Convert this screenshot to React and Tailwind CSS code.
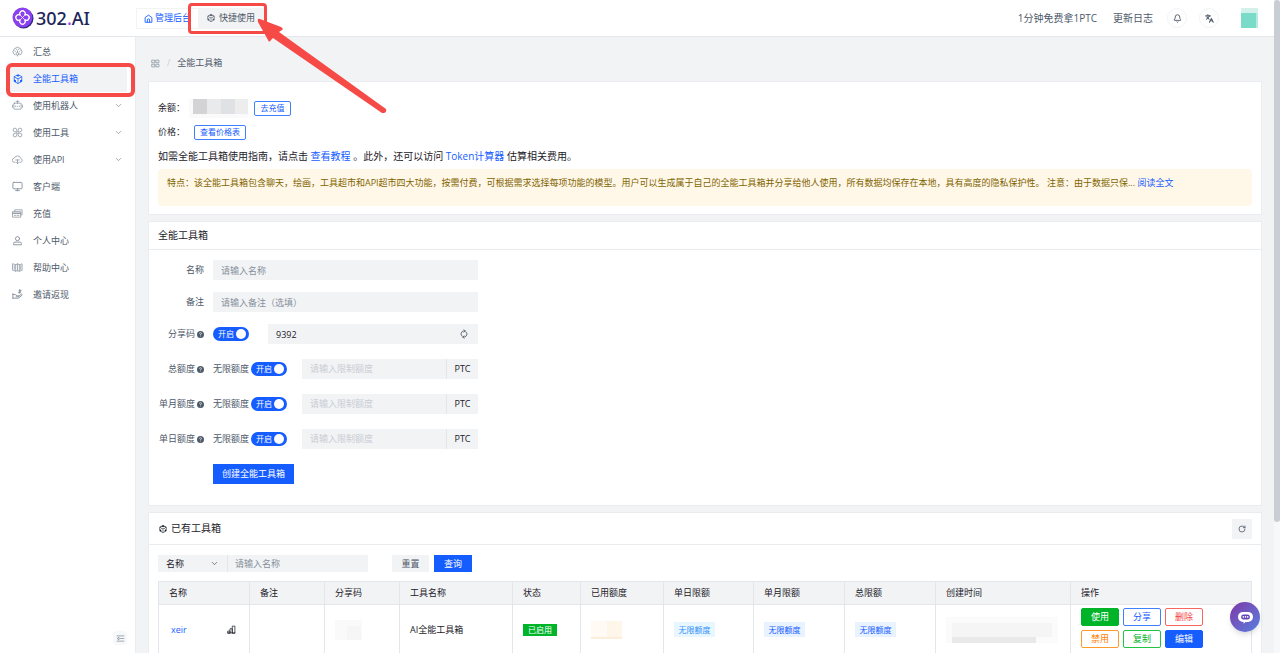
import React, { useState } from "react";
import {
  Bell,
  ChevronDown,
  Languages,
  Monitor,
  RotateCw,
  RefreshCw,
} from "lucide-react";
import { AiOutlineCodeSandbox } from "react-icons/ai";
import { BsFillQuestionCircleFill } from "react-icons/bs";

const Icon = ({ children, className = "w-[11px] h-[11px]", width = 1.6 }) => (
  <svg
    viewBox="0 0 24 24"
    fill="none"
    stroke="currentColor"
    strokeWidth={width}
    strokeLinecap="round"
    strokeLinejoin="round"
    className={className}
    aria-hidden="true"
  >
    {children}
  </svg>
);

const HomeIcon = () => (
  <Icon className="w-[9px] h-[9px]" width={2.4}>
    <path d="M3 21V9.500L12 3l9 6.500V21z" />
    <path d="M9 21v-5a3 3 0 0 1 6 0v5" />
  </Icon>
);

const GaugeIcon = () => (
  <Icon>
    <path d="M7 19H5a9.500 9.500 0 1 1 14 0h-2" />
    <path d="M12 10v4M6 11l1.500.8M18 11l-1.500.8M9 6.500l.8 1.400M15 6.500l-.8 1.400" />
    <circle cx="12" cy="17" r="3" />
    <path d="M12 20v2" />
  </Icon>
);

const RobotIcon = () => (
  <Icon>
    <path d="M12 2v5M9 3h6" />
    <rect x="4" y="7" width="16" height="13" rx="1" />
    <path d="M1 11v5M23 11v5M8 13v1.500M12 14v.5M16 13v1.500" />
  </Icon>
);

const ToolsIcon = () => (
  <Icon>
    <path d="M10.500 10.500H6.500a4 4 0 1 1 4-4zM13.500 10.500v-4a4 4 0 1 1 4 4zM10.500 13.500v4a4 4 0 1 1-4-4zM13.500 13.500h4a4 4 0 1 1-4 4z" />
  </Icon>
);

const CloudIcon = () => (
  <Icon>
    <path d="M7 18H5.500a4.500 4.500 0 0 1-.5-9 7.500 7.500 0 0 1 14.300 1A4.200 4.200 0 0 1 19 18h-2" />
    <path d="M8 13h8M12 13v8M9.500 18.500L12 21l2.500-2.500" />
  </Icon>
);

const CardIcon = () => (
  <Icon>
    <path d="M6 7V4h16v11h-3" />
    <rect x="2" y="8" width="17" height="12" />
    <path d="M2 12h17M2 11h17M5 16h3M11 16h4" />
  </Icon>
);

const UserIcon = () => (
  <Icon width={2}>
    <circle cx="12" cy="8" r="4.500" />
    <path d="M3.500 20.500v-2a3 3 0 0 1 3-3h11a3 3 0 0 1 3 3v2z" />
  </Icon>
);

const BookIcon = () => (
  <Icon>
    <path d="M2 4l6 2 4-2 4 2 6-2v14l-6 2-4-1-4 1-6-2z" />
    <path d="M8 6v14M12 4v15M16 6v14M5 8v8M19 8v8" />
  </Icon>
);

const HandIcon = () => (
  <Icon width={2}>
    <path d="M2 10v11M2 12h5l4 3h4M2 20h12l8-6.500a1.500 1.500 0 0 0-2-2L15 15.500M9 17h6" />
    <path d="M17 1v8M20 3h-4.500a1.500 1.500 0 0 0 0 2.500h3a1.500 1.500 0 0 1 0 2.500H14" />
  </Icon>
);

const menus = [
  { name: "汇总", icon: <GaugeIcon /> },
  {
    name: "全能工具箱",
    icon: <AiOutlineCodeSandbox className="w-3 h-3" />,
    active: true,
  },
  { name: "使用机器人", icon: <RobotIcon />, more: true },
  { name: "使用工具", icon: <ToolsIcon />, more: true },
  { name: "使用API", icon: <CloudIcon />, more: true },
  { name: "客户端", icon: <Monitor className="w-[11px] h-[11px]" /> },
  { name: "充值", icon: <CardIcon /> },
  { name: "个人中心", icon: <UserIcon /> },
  { name: "帮助中心", icon: <BookIcon /> },
  { name: "邀请返现", icon: <HandIcon /> },
];

const Logo = () => (
  <a href="#home" className="flex w-[124px] items-center gap-[2px]">
    <svg viewBox="0 0 44 44" className="w-[22px] h-[22px]" aria-hidden="true">
      <circle cx="23" cy="23" r="20" fill="#2b2a78" />
      <circle cx="21" cy="21" r="20" fill="#8a3ff0" />
      <g fill="none" stroke="#fff" strokeWidth="2.600">
        <path d="M17 17a5.500 5.500 0 1 1 8 0 5.500 5.500 0 1 1 0 8 5.500 5.500 0 1 1-8 0 5.500 5.500 0 1 1 0-8z" />
        <path d="M17 17l8 8M25 17l-8 8" strokeWidth="1.500" />
      </g>
    </svg>
    <span className="font-['Noto_Sans',sans-serif] text-[18px] leading-5 font-medium text-[#1b2559]">
      302<span className="text-[#a23cf0]">.</span>AI
    </span>
  </a>
);

const Header = () => (
  <header className="relative z-20 flex h-[37px] shrink-0 items-center border-b border-[#e5e6eb] bg-white pl-3 pr-4">
    <Logo />
    <nav className="flex h-[21px] items-stretch border border-[#f2f3f5] text-[9px]">
      <a
        href="#admin"
        className="flex w-[61px] items-center gap-[2px] pl-[7px] whitespace-nowrap text-[#165dff]"
      >
        <HomeIcon />
        管理后台
      </a>
      <a
        href="#quick"
        className="relative flex w-[68px] items-center gap-[3px] bg-[#f2f3f5] pl-2 whitespace-nowrap text-[#4e5969]"
      >
        <AiOutlineCodeSandbox className="w-[10px] h-[10px]" />
        快捷使用
        <span className="pointer-events-none absolute -top-[6px] -bottom-[6px] -left-[10px] -right-px rounded-[4px] border-[3px] border-[#f54a45]" />
        <svg
          viewBox="0 0 130 96"
          className="pointer-events-none absolute left-[59px] top-[9px] h-[96px] w-[130px]"
          aria-hidden="true"
        >
          <path
            d="M3 1L24 9Q27 11 25 12L22 14L129 91Q130 94 127 95L125 95L16 20L14 22Q12 25 11 22L1 4Q0 0 3 1Z"
            fill="#f54a45"
          />
        </svg>
      </a>
    </nav>
    <div className="ml-auto flex items-center text-[10px] text-[#4e5969]">
      <a href="#free">1分钟免费拿1PTC</a>
      <a href="#log" className="ml-4">
        更新日志
      </a>
      <button
        aria-label="通知"
        className="ml-[14px] flex h-5 w-5 items-center justify-center rounded-full border border-[#f2f3f5]"
      >
        <Bell className="h-[9px] w-[9px]" strokeWidth={2.400} />
      </button>
      <button
        aria-label="语言"
        className="ml-3 flex h-5 w-5 items-center justify-center rounded-full border border-[#f2f3f5]"
      >
        <Languages className="h-[9px] w-[9px]" strokeWidth={2.800} />
      </button>
      <div className="ml-[22px] flex h-5 w-[17px] flex-col">
        <div className="h-[5px] bg-[#d3f1eb]" />
        <div className="flex-1 border-r-2 border-[#b5ebe0] bg-[#7adbc8]" />
      </div>
    </div>
  </header>
);

const Sidebar = () => (
  <aside className="relative z-10 flex w-[136px] shrink-0 flex-col border-r border-[#ebecf0] bg-white pt-px">
    {menus.map((item) => (
      <a
        key={item.name}
        href="#menu"
        className={
          item.active
            ? "relative mx-2 flex h-[27px] items-center bg-[#f2f3f5] pl-1 text-[9px] text-[#165dff]"
            : "mx-2 flex h-[27px] items-center pl-1 text-[9px] text-[#4e5969]"
        }
      >
        <span
          className={
            item.active ? "flex w-[21px]" : "flex w-[21px] text-[#86909c]"
          }
        >
          {item.icon}
        </span>
        {item.name}
        {item.more && (
          <ChevronDown className="ml-auto mr-1 h-[9px] w-[9px] text-[#86909c]" />
        )}
        {item.active && (
          <span className="pointer-events-none absolute -left-[2px] -right-2 -top-[2px] -bottom-[5px] rounded-md border-4 border-[#f54a45]" />
        )}
      </a>
    ))}
    <button
      aria-label="收起菜单"
      className="mt-auto mr-2 mb-2 flex h-[14px] w-[14px] items-center justify-center self-end rounded-sm bg-[#f7f8fa] text-[#86909c]"
    >
      <Icon className="h-[9px] w-[9px]" width={2}>
        <path d="M3 5h18M11 12h10M3 19h18M7 9l-4 3 4 3z" />
      </Icon>
    </button>
  </aside>
);

const Intro = () => (
  <section className="border border-[#ebecf0] bg-white px-[9px] pt-[14px] pb-2">
    <div className="flex h-6 items-center text-[9px]">
      <span className="text-[#1d2129]">余额：</span>
      <div className="ml-1 flex h-[19px] w-[59px] border-b-4 border-l-4 border-[#fafafa]">
        <div className="h-[15px] w-[14px] bg-[#d3d3d5]" />
        <div className="h-[15px] w-[14px] bg-[#e9eaec]" />
        <div className="h-[15px] w-[14px] bg-[#e0e1e4]" />
        <div className="h-[15px] flex-1 bg-[#ededee]" />
      </div>
      <button className="ml-[6px] h-[15px] w-[37px] rounded-[2px] border border-[#4080ff] text-[8px] leading-3 text-[#165dff]">
        去充值
      </button>
    </div>
    <div className="flex h-6 items-center text-[9px]">
      <span className="text-[#1d2129]">价格：</span>
      <button className="ml-[9px] h-[15px] w-[52px] rounded-[2px] border border-[#4080ff] text-[8px] leading-3 text-[#165dff]">
        查看价格表
      </button>
    </div>
    <p className="h-[25px] text-[10px] leading-[25px] text-[#1d2129]">
      如需全能工具箱使用指南，请点击{" "}
      <a href="#guide" className="text-[#165dff]">
        查看教程
      </a>{" "}
      。此外，还可以访问{" "}
      <a href="#token" className="text-[#165dff]">
        Token计算器
      </a>{" "}
      估算相关费用。
    </p>
    <div className="h-[37px] truncate rounded-sm bg-[#fff7e8] px-[9px] text-[9px] leading-[27px] text-[#7f6500]">
      特点：该全能工具箱包含聊天，绘画，工具超市和API超市四大功能，按需付费，可根据需求选择每项功能的模型。用户可以生成属于自己的全能工具箱并分享给他人使用，所有数据均保存在本地，具有高度的隐私保护性。
      注意：由于数据只保...{" "}
      <a href="#full" className="text-[#165dff]">
        阅读全文
      </a>
    </div>
  </section>
);

const Switch = ({ label }) => {
  const [checked, setChecked] = useState(true);

  return (
    <label
      className={
        checked
          ? "relative flex h-[14px] w-9 shrink-0 cursor-pointer items-center justify-between rounded-full bg-[#165dff] pl-[5px] pr-[3px] text-[8px] text-white"
          : "relative flex h-[14px] w-9 shrink-0 cursor-pointer flex-row-reverse items-center justify-between rounded-full bg-[#c9cdd4] pl-[3px] pr-[5px] text-[8px] text-white"
      }
    >
      <input
        type="checkbox"
        aria-label={label}
        checked={checked}
        onChange={(e) => setChecked(e.target.checked)}
        className="sr-only"
      />
      <span>{checked ? "开启" : "关闭"}</span>
      <span className="h-[10px] w-[10px] rounded-full bg-white" />
    </label>
  );
};

const Row = ({ id, label, help, children }) => (
  <div className="flex h-5 items-center gap-[9px]">
    <label
      htmlFor={id}
      className="flex w-[46px] shrink-0 items-center justify-end gap-[2px] whitespace-nowrap text-[9px] text-[#4e5969]"
    >
      {label}
      {help && <BsFillQuestionCircleFill className="h-[7px] w-[7px]" />}
    </label>
    {children}
  </div>
);

const limits = [
  { id: "total", label: "总额度" },
  { id: "month", label: "单月额度" },
  { id: "day", label: "单日额度" },
];

const CreateForm = () => {
  const [form, setForm] = useState({ name: "", remark: "", code: "9392" });

  const handleChange = (e) => {
    const { name, value } = e.target;
    setForm({ ...form, [name]: value });
  };

  return (
    <section className="border border-[#ebecf0] bg-white">
      <h2 className="border-b border-[#ebecf0] px-[9px] text-[10px] leading-[27px] text-[#1d2129]">
        全能工具箱
      </h2>
      <form
        onSubmit={(e) => e.preventDefault()}
        className="flex w-full max-w-[338px] flex-col gap-3 px-[9px] pt-[10px] pb-[21px]"
      >
        <Row id="name" label="名称">
          <input
            id="name"
            name="name"
            value={form.name}
            onChange={handleChange}
            placeholder="请输入名称"
            className="h-5 min-w-0 flex-1 bg-[#f2f3f5] px-2 text-[9px] placeholder:text-[#86909c]"
          />
        </Row>
        <Row id="remark" label="备注">
          <input
            id="remark"
            name="remark"
            value={form.remark}
            onChange={handleChange}
            placeholder="请输入备注（选填）"
            className="h-5 min-w-0 flex-1 bg-[#f2f3f5] px-2 text-[9px] placeholder:text-[#86909c]"
          />
        </Row>
        <Row id="code" label="分享码" help>
          <Switch label="分享码" />
          <div className="ml-[10px] flex h-5 min-w-0 flex-1 items-center bg-[#f2f3f5] pr-[10px]">
            <input
              id="code"
              name="code"
              value={form.code}
              onChange={handleChange}
              className="h-5 min-w-0 flex-1 px-2 text-[9px] text-[#1d2129]"
            />
            <button type="button" aria-label="刷新分享码">
              <RefreshCw
                className="h-2 w-2 -rotate-45 text-[#4e5969]"
                strokeWidth={2.400}
              />
            </button>
          </div>
        </Row>
        <div className="mt-[3px] flex flex-col gap-[15px]">
          {limits.map((limit) => (
            <Row key={limit.id} id={limit.id} label={limit.label} help>
              <div className="flex items-center gap-[2px] whitespace-nowrap text-[9px] text-[#4e5969]">
                无限额度
                <Switch label={`${limit.label}无限额度`} />
              </div>
              <div className="ml-[6px] flex h-5 min-w-0 flex-1 bg-[#f2f3f5] text-[9px]">
                <input
                  id={limit.id}
                  disabled
                  placeholder="请输入限制额度"
                  className="min-w-0 flex-1 border-r border-[#e5e6eb] px-2 placeholder:text-[#c9cdd4]"
                />
                <span className="w-[31px] text-center leading-5 text-[#1d2129]">
                  PTC
                </span>
              </div>
            </Row>
          ))}
        </div>
        <button
          type="submit"
          className="mt-[3px] ml-[55px] h-5 w-[81px] bg-[#165dff] text-[9px] text-white"
        >
          创建全能工具箱
        </button>
      </form>
    </section>
  );
};

const columns = [
  { name: "名称", width: "w-[91px]" },
  { name: "备注", width: "w-[75px]" },
  { name: "分享码", width: "w-[75px]" },
  { name: "工具名称", width: "w-[113px]" },
  { name: "状态", width: "w-[68px]" },
  { name: "已用额度", width: "w-[83px]" },
  { name: "单日限额", width: "w-[90px]" },
  { name: "单月限额", width: "w-[91px]" },
  { name: "总限额", width: "w-[91px]" },
  { name: "创建时间", width: "w-[135px]" },
  { name: "操作", width: "" },
];

const actions = [
  { name: "使用", style: "border-[#00b42a] bg-[#00b42a] text-white" },
  { name: "分享", style: "border-[#4080ff] text-[#165dff]" },
  { name: "删除", style: "border-[#f76560] text-[#f53f3f]" },
  { name: "禁用", style: "border-[#ff9a2e] text-[#ff7d00]" },
  { name: "复制", style: "border-[#23c343] text-[#00b42a]" },
  { name: "编辑", style: "border-[#165dff] bg-[#165dff] text-white" },
];

const ToolTable = () => (
  <table className="mt-[9px] w-full table-fixed border-collapse text-[9px] text-[#1d2129]">
    <thead>
      <tr className="h-[23px] bg-[#f2f3f5]">
        {columns.map((col) => (
          <th
            key={col.name}
            className={`${col.width} border border-[#e5e6eb] px-[10px] text-left font-normal`}
          >
            {col.name}
          </th>
        ))}
      </tr>
    </thead>
    <tbody>
      <tr className="h-[50px] [&>td]:border [&>td]:border-[#e5e6eb] [&>td]:px-[10px]">
        <td>
          <div className="flex items-center justify-between pl-[2px] pr-[3px]">
            <a href="#xeir" className="text-[#165dff]">
              xeir
            </a>
            <Icon className="h-[9px] w-[9px]" width={2}>
              <path d="M2 21v-5h6v5zM8 21V10h6v11M14 21V3h7v18zM2 21h19" />
            </Icon>
          </div>
        </td>
        <td />
        <td>
          <div className="h-5 w-[27px] bg-[#fafafa] pt-[6px] pl-3">
            <div className="h-[14px] w-[14px] bg-[#f6f6f7]" />
          </div>
        </td>
        <td>AI全能工具箱</td>
        <td>
          <span className="block w-[34px] bg-[#00b42a] text-center text-[8px] leading-3 text-white">
            已启用
          </span>
        </td>
        <td>
          <div className="flex h-[18px] w-[31px] border-b-2 border-[#fdeedb] bg-[#fffaf3]">
            <div className="ml-auto w-[15px] bg-[#fff6ea]" />
          </div>
        </td>
        <td>
          <span className="block w-[41px] bg-[#e8f7ff] text-center text-[8px] leading-[15px] text-[#3491fa]">
            无限额度
          </span>
        </td>
        <td>
          <span className="block w-[41px] bg-[#e8f3ff] text-center text-[8px] leading-[15px] text-[#165dff]">
            无限额度
          </span>
        </td>
        <td>
          <span className="block w-[41px] bg-[#e8f3ff] text-center text-[8px] leading-[15px] text-[#165dff]">
            无限额度
          </span>
        </td>
        <td>
          <div className="flex h-[26px] w-[112px] flex-col bg-[#fbfbfb]">
            <div className="mt-auto mx-[6px] h-[14px] bg-[#f5f5f6]" />
            <div className="ml-[6px] h-[6px] w-[84px] bg-[#e9e9ea]" />
          </div>
        </td>
        <td>
          <div className="grid w-[122px] grid-cols-3 gap-1 pb-1">
            {actions.map((action) => (
              <button
                key={action.name}
                className={`h-[18px] rounded-[2px] border text-[9px] leading-4 ${action.style}`}
              >
                {action.name}
              </button>
            ))}
          </div>
        </td>
      </tr>
    </tbody>
  </table>
);

const ToolList = () => (
  <section className="border border-[#ebecf0] bg-white">
    <div className="flex h-8 items-center border-b border-[#ebecf0] px-[9px]">
      <h2 className="flex items-center gap-[3px] text-[10px] text-[#1d2129]">
        <AiOutlineCodeSandbox className="h-[10px] w-[10px]" />
        已有工具箱
      </h2>
      <button
        aria-label="刷新"
        className="ml-auto flex h-5 w-5 items-center justify-center bg-[#f2f3f5] text-[#4e5969]"
      >
        <RotateCw className="h-2 w-2" strokeWidth={2.400} />
      </button>
    </div>
    <div className="px-[9px] pt-[10px] pb-3">
      <div className="flex h-[17px] items-stretch text-[9px]">
        <div className="relative w-[70px] border-r border-[#e5e6eb] bg-[#f2f3f5]">
          <select
            aria-label="筛选字段"
            className="h-full w-full appearance-none px-2 text-[#1d2129]"
          >
            <option>名称</option>
            <option>备注</option>
          </select>
          <ChevronDown className="pointer-events-none absolute top-1 right-2 h-[9px] w-[9px] text-[#4e5969]" />
        </div>
        <input
          aria-label="请输入名称"
          placeholder="请输入名称"
          className="w-[140px] bg-[#f2f3f5] px-[7px] placeholder:text-[#86909c]"
        />
        <button className="ml-6 w-[37px] bg-[#f2f3f5] text-[#4e5969]">
          重置
        </button>
        <button className="ml-[5px] w-[38px] bg-[#165dff] text-white">
          查询
        </button>
      </div>
      <ToolTable />
    </div>
  </section>
);

const App = () => {
  return (
    <div className="relative flex h-screen overflow-hidden bg-white font-['Open_Sans','Noto_Sans_CJK_SC',sans-serif]">
      <div className="flex min-w-0 flex-1 flex-col">
        <Header />
        <div className="flex min-h-0 flex-1">
          <Sidebar />
          <main className="min-w-0 flex-1 overflow-hidden bg-[#f2f3f5] px-3">
            {/* Breadcrumb */}
            <nav className="flex h-11 items-center pt-2 pl-[3px] text-[9px] text-[#4e5969]">
              <Icon className="h-[9px] w-[9px] text-[#86909c]" width={2}>
                <path d="M3 3h7v7H3zM14 3h7v7h-7zM3 14h7v7H3zM14 14h7v7h-7z" />
              </Icon>
              <span className="mx-[7px] text-[#c9cdd4]">/</span>
              <span>全能工具箱</span>
            </nav>
            <div className="flex flex-col gap-[6px]">
              <Intro />
              <CreateForm />
              <ToolList />
            </div>
          </main>
        </div>
      </div>

      {/* Scrollbar */}
      <div className="w-[6px] shrink-0 bg-[#f7f8fa]">
        <div className="h-4/5 rounded-full bg-[#c9cdd4]" />
      </div>

      {/* Chat */}
      <button
        aria-label="在线客服"
        className="absolute right-5 bottom-[21px] z-20 flex h-[30px] w-[30px] items-center justify-center rounded-full bg-linear-to-br from-[#7a35a8] to-[#4f7fe0] shadow-md"
      >
        <svg viewBox="0 0 24 24" className="h-[15px] w-[15px]" aria-hidden="true">
          <path
            d="M8 3h8a7.500 7.500 0 0 1 0 16h-4l-3 3v-3H8A7.500 7.500 0 0 1 8 3z"
            fill="#fff"
          />
          <rect x="5" y="7" width="14" height="8" rx="4" fill="#6247b8" />
          <circle cx="8.500" cy="11" r="1.300" fill="#fff" />
          <circle cx="12" cy="11" r="1.300" fill="#fff" />
          <circle cx="15.500" cy="11" r="1.300" fill="#fff" />
        </svg>
      </button>
    </div>
  );
};

export default App;
